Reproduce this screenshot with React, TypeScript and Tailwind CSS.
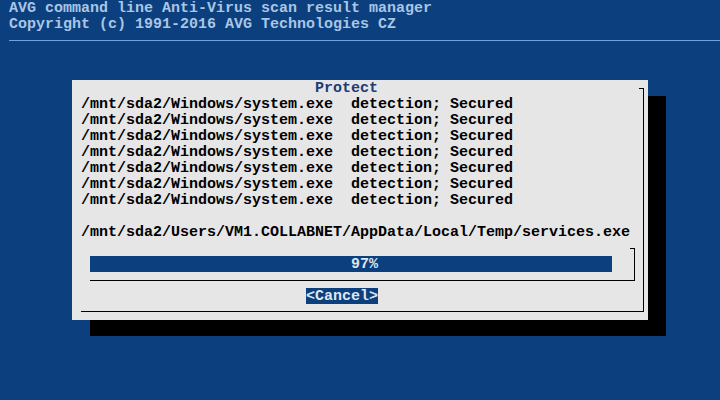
const BLUE = "bg-[#0c3f7e]";

const detections = Array.from({ length: 7 }, () => "/mnt/sda2/Windows/system.exe  detection; Secured");

export default function App() {
  return (
    <div
      className={`w-[720px] h-[400px] ${BLUE} overflow-hidden text-[15px] leading-4 font-bold`}
      style={{ fontFamily: '"Liberation Mono", "DejaVu Sans Mono", monospace' }}
    >
      {/* Header */}
      <div className="pl-[9px] text-[#a9c6e4] whitespace-pre">
        <div className="h-4 pt-px">AVG command line Anti-Virus scan result manager</div>
        <div className="h-4 pt-px">Copyright (c) 1991-2016 AVG Technologies CZ</div>
        <div className="h-4 flex items-center">
          <div className="h-px w-full bg-[#6ea4dc]" />
        </div>
      </div>

      {/* Dialog */}
      <div className="mt-8 ml-[72px] w-[576px] h-[240px] bg-[#e6e6e6] shadow-[18px_16px_0_0_#000] pt-2 pl-[4px]">
        <div className="relative w-[568px] h-[224px] border-r border-black flex flex-col whitespace-pre text-black">
          {/* top-right corner tick */}
          <div className="absolute right-0 top-0 w-[4px] h-px bg-black" />

          <div className="-mt-2 h-4 pt-px pl-[239px] text-[#1d3c78]">Protect</div>

          <div className="pl-[5px]">
            {detections.map((line, i) => (
              <div key={i} className="h-4 pt-px">
                {line}
              </div>
            ))}
            <div className="h-4" />
            <div className="h-4 pt-px">/mnt/sda2/Users/VM1.COLLABNET/AppData/Local/Temp/services.exe</div>
          </div>

          {/* Gauge */}
          <div className="relative mt-2 ml-[9px] w-[550px] border-r border-black pt-2 flex flex-col">
            <div className="absolute right-0 top-0 w-[4px] h-px bg-black" />
            <div className={`ml-[5px] w-[522px] h-4 pt-px ${BLUE} pl-[261px] text-[#dfe6ee]`}>97%</div>
            <div className="h-2" />
            <div className="ml-[5px] h-px bg-black" />
          </div>

          {/* Button */}
          <div className="mt-[7px] h-4 pl-[230px]">
            <span className={`${BLUE} text-[#dfe6ee] inline-block h-4 pt-px`}>&lt;Cancel&gt;</span>
          </div>

          <div className="mt-auto ml-[5px] h-px bg-black" />
        </div>
      </div>
    </div>
  );
}
